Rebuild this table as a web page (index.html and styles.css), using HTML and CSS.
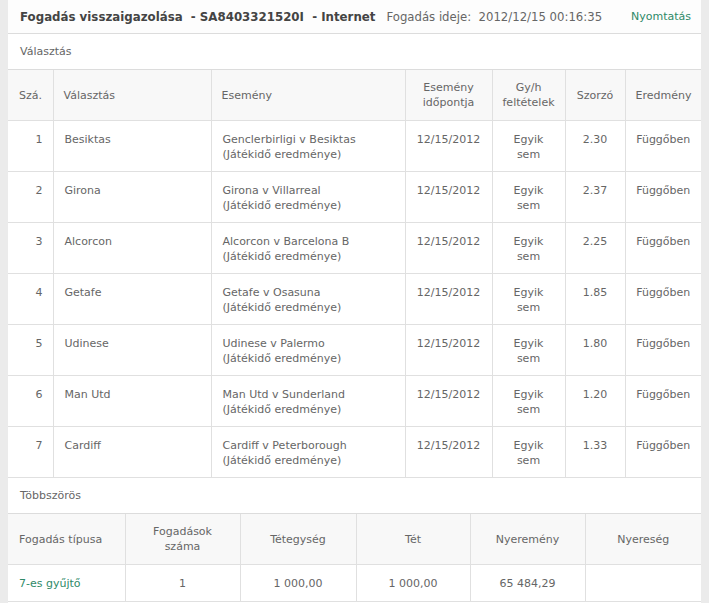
FILE: index.html
```html
<!DOCTYPE html>
<html lang="hu">
<head>
<meta charset="utf-8">
<title>Fogadás visszaigazolása</title>
<link rel="stylesheet" href="styles.css">
</head>
<body>
<div class="panel">
  <div class="titlebar">
    <div class="title"><b>Fogadás visszaigazolása&nbsp; - SA8403321520I&nbsp; - Internet</b><span class="time">Fogadás ideje:&nbsp; 2012/12/15 00:16:35</span></div>
    <a class="print" href="#">Nyomtatás</a>
  </div>
  <div class="section">Választás</div>
  <table class="grid sel">
    <colgroup>
      <col class="c1"><col class="c2"><col class="c3"><col class="c4"><col class="c5"><col class="c6"><col class="c7">
    </colgroup>
    <thead>
      <tr>
        <th class="l">Szá.</th>
        <th class="l">Választás</th>
        <th class="l">Esemény</th>
        <th>Esemény<br>időpontja</th>
        <th>Gy/h<br>feltételek</th>
        <th>Szorzó</th>
        <th>Eredmény</th>
      </tr>
    </thead>
    <tbody>
      <tr><td class="r">1</td><td class="l">Besiktas</td><td class="l">Genclerbirligi v Besiktas<br>(Játékidő eredménye)</td><td>12/15/2012</td><td>Egyik<br>sem</td><td>2.30</td><td>Függőben</td></tr>
      <tr><td class="r">2</td><td class="l">Girona</td><td class="l">Girona v Villarreal<br>(Játékidő eredménye)</td><td>12/15/2012</td><td>Egyik<br>sem</td><td>2.37</td><td>Függőben</td></tr>
      <tr><td class="r">3</td><td class="l">Alcorcon</td><td class="l">Alcorcon v Barcelona B<br>(Játékidő eredménye)</td><td>12/15/2012</td><td>Egyik<br>sem</td><td>2.25</td><td>Függőben</td></tr>
      <tr><td class="r">4</td><td class="l">Getafe</td><td class="l">Getafe v Osasuna<br>(Játékidő eredménye)</td><td>12/15/2012</td><td>Egyik<br>sem</td><td>1.85</td><td>Függőben</td></tr>
      <tr><td class="r">5</td><td class="l">Udinese</td><td class="l">Udinese v Palermo<br>(Játékidő eredménye)</td><td>12/15/2012</td><td>Egyik<br>sem</td><td>1.80</td><td>Függőben</td></tr>
      <tr><td class="r">6</td><td class="l">Man Utd</td><td class="l">Man Utd v Sunderland<br>(Játékidő eredménye)</td><td>12/15/2012</td><td>Egyik<br>sem</td><td>1.20</td><td>Függőben</td></tr>
      <tr><td class="r">7</td><td class="l">Cardiff</td><td class="l">Cardiff v Peterborough<br>(Játékidő eredménye)</td><td>12/15/2012</td><td>Egyik<br>sem</td><td>1.33</td><td>Függőben</td></tr>
    </tbody>
  </table>
  <div class="section">Többszörös</div>
  <table class="grid multi">
    <colgroup>
      <col class="m1"><col class="m2"><col class="m3"><col class="m4"><col class="m5"><col class="m6">
    </colgroup>
    <thead>
      <tr>
        <th class="l">Fogadás típusa</th>
        <th>Fogadások<br>száma</th>
        <th>Tétegység</th>
        <th>Tét</th>
        <th>Nyeremény</th>
        <th>Nyereség</th>
      </tr>
    </thead>
    <tbody>
      <tr><td class="l"><a href="#">7-es gyűjtő</a></td><td>1</td><td>1 000,00</td><td>1 000,00</td><td>65 484,29</td><td></td></tr>
    </tbody>
  </table>
</div>
</body>
</html>
```

FILE: styles.css
```css
html, body {
  margin: 0;
  padding: 0;
}
body {
  background: #ebebeb;
  font-family: "DejaVu Sans", Verdana, sans-serif;
  font-size: 11px;
  color: #666;
  padding-left: 8px;
  height: 603px;
  overflow: hidden;
}
a {
  color: #2f8a68;
  text-decoration: none;
}
.panel {
  width: 693px;
  background: #fff;
  min-height: 603px;
}
.titlebar {
  display: flex;
  align-items: center;
  justify-content: space-between;
  height: 33px;
  border-bottom: 1px solid #dcdcdc;
  padding: 0 10px 0 12px;
  background: #fdfdfd;
}
.title {
  color: #444;
  font-size: 11.8px;
}
.title b {
  font-weight: bold;
  color: #444;
}
.time {
  color: #666;
  font-size: 11.7px;
  margin-left: 11px;
}
.print {
  font-size: 11px;
}
.section {
  height: 35px;
  line-height: 35px;
  padding-left: 12px;
  border-bottom: 1px solid #dcdcdc;
}
.grid {
  border-collapse: collapse;
  table-layout: fixed;
  width: 693px;
}
.grid th, .grid td {
  border: 1px solid #e0e0e0;
  border-top: none;
  padding: 0 10px;
  line-height: 15px;
  text-align: center;
  font-weight: normal;
}
.grid th:first-child, .grid td:first-child { border-left: none; }
.grid th:last-child, .grid td:last-child { border-right: none; }
.grid th {
  background: #f8f8f8;
  height: 50px;
  vertical-align: middle;
  color: #666;
}
.grid .l { text-align: left; }
.grid .r { text-align: right; }
.sel td {
  height: 51px;
  vertical-align: top;
  padding-top: 11px;
  padding-bottom: 0;
  box-sizing: border-box;
}
.sel th.l:first-child, .sel td.l { padding-left: 11px; }
.sel th:first-child { padding-left: 12px; }
.multi td {
  height: 36px;
  vertical-align: middle;
}
.multi th.l, .multi td.l { padding-left: 11px; }

.c1 { width: 45px; }
.c2 { width: 158px; }
.c3 { width: 194px; }
.c4 { width: 87px; }
.c5 { width: 73px; }
.c6 { width: 60px; }
.c7 { width: 76px; }

.m1 { width: 117px; }
.m2 { width: 115px; }
.m3 { width: 116px; }
.m4 { width: 114px; }
.m5 { width: 115px; }
.m6 { width: 116px; }
```
